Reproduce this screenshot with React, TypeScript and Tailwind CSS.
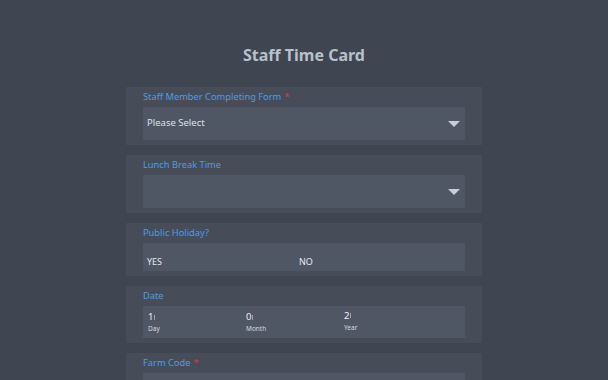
import React from "react";

function Caret() {
  return (
    <svg width="12" height="6" viewBox="0 0 12 6" className="shrink-0">
      <path d="M0 0 H12 L6 6 Z" fill="#c9ced6" />
    </svg>
  );
}

function Field({
  label,
  required,
  children,
}: {
  label: string;
  required?: boolean;
  children: React.ReactNode;
}) {
  return (
    <div className="bg-[#464d59] px-[17px] pt-[4px] pb-[5px]">
      <div className="text-[9.3px] leading-[12px] text-[#4d9be6]">
        {label}
        {required && <span className="ml-[3px] text-[#e0383e]">*</span>}
      </div>
      <div className="mt-[4px]">{children}</div>
    </div>
  );
}

function Select({ value }: { value?: string }) {
  return (
    <div className="flex h-[33px] items-center justify-between bg-[#4f5765] pl-[4px] pr-[5px] text-[9.5px] text-[#dde1e6]">
      <span>{value}</span>
      <Caret />
    </div>
  );
}

function DatePart({ value, label, lift }: { value: string; label: string; lift?: boolean }) {
  return (
    <div className={lift ? "flex w-[98px] flex-col -mt-[3px]" : "flex w-[98px] flex-col"}>
      <div className="flex items-center text-[9.5px] leading-[10px] text-[#eef0f3]">
        {value}
        <span className="ml-[1px] h-[5px] w-px bg-[#9aa2ae]" />
      </div>
      <div className="mt-[3px] text-[6.5px] leading-[7px] text-[#d5d9df]">{label}</div>
    </div>
  );
}

export default function App() {
  return (
    <div
      className="h-[380px] w-[608px] overflow-hidden bg-[#3f4551]"
      style={{ fontFamily: '"Noto Sans", "Open Sans", sans-serif' }}
    >
      <h1 className="pt-[43px] text-center text-[16px] font-bold leading-[24px] text-[#b8c0cb]">
        Staff Time Card
      </h1>
      <div className="mx-auto mt-[20px] flex w-[356px] flex-col gap-[10px]">
        <Field label="Staff Member Completing Form" required>
          <Select value="Please Select" />
        </Field>
        <Field label="Lunch Break Time">
          <Select />
        </Field>
        <Field label="Public Holiday?">
          <div className="flex h-[28px] items-center bg-[#4f5765] pl-[4px] pt-[10px] text-[9px] text-[#e6e9ed]">
            <span className="w-[152px]">YES</span>
            <span>NO</span>
          </div>
        </Field>
        <Field label="Date">
          <div className="flex h-[32px] items-center bg-[#4f5765] pl-[5px]">
            <DatePart value="1" label="Day" />
            <DatePart value="0" label="Month" />
            <DatePart value="2" label="Year" lift />
          </div>
        </Field>
        <Field label="Farm Code" required>
          <Select />
        </Field>
      </div>
    </div>
  );
}
